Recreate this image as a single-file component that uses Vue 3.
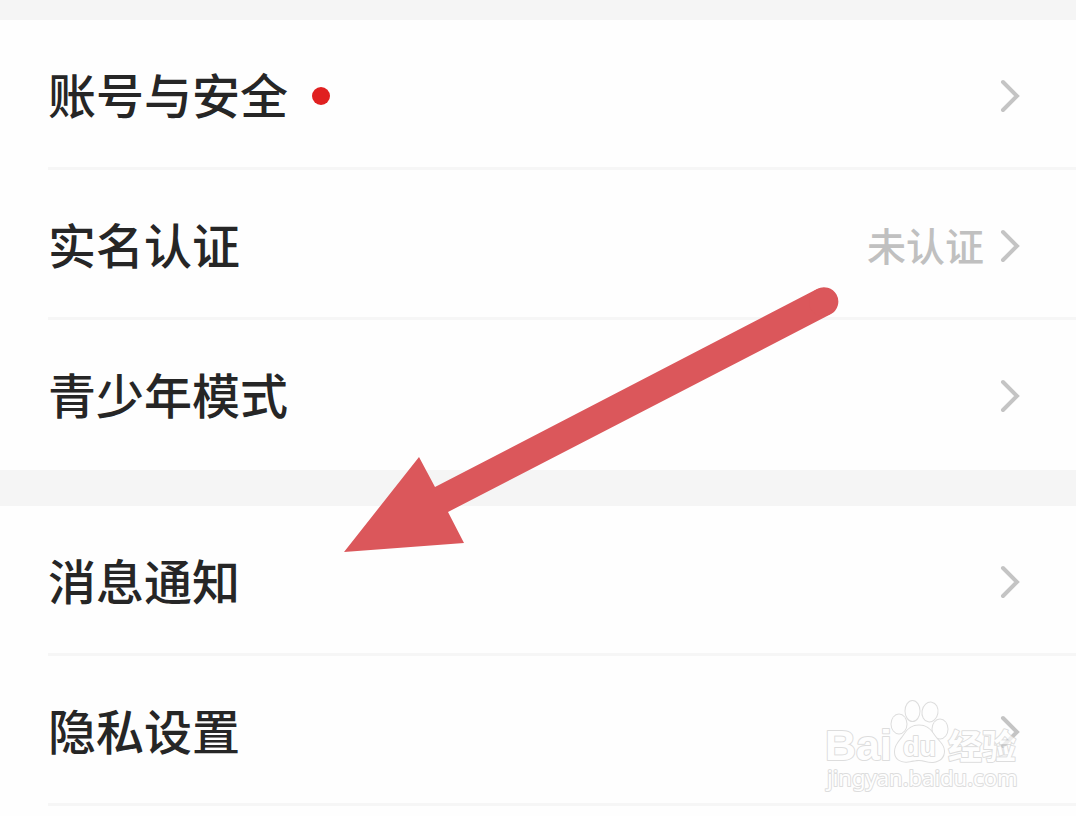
<script setup>
const groups = [
  [
    { label: '账号与安全', dot: true },
    { label: '实名认证', status: '未认证' },
    { label: '青少年模式' },
  ],
  [{ label: '消息通知' }, { label: '隐私设置' }],
]
</script>

<template>
  <main class="settings">
    <ul v-for="(group, i) in groups" :key="i" class="group">
      <li v-for="item in group" :key="item.label" class="item">
        <button type="button" class="row">
          <span class="label">{{ item.label }}</span>
          <span v-if="item.dot" class="dot"></span>
          <span class="status">{{ item.status }}</span>
          <svg class="chevron" viewBox="0 0 20 34" aria-hidden="true">
            <path d="M3 3 L17 17 L3 31" />
          </svg>
        </button>
      </li>
    </ul>

    <svg class="arrow" viewBox="0 0 496 266" aria-hidden="true">
      <path
        d="M1 265 L76 170 L92 200 L474 2 A14 14 0 0 1 488 27 L105 225 L121 256 Z"
      />
      <circle cx="480" cy="15" r="14" />
    </svg>

    <svg class="watermark" viewBox="0 0 200 100" aria-hidden="true">
      <text class="brand" x="1" y="65">Bai</text>
      <g class="paw">
        <ellipse cx="75" cy="29" rx="7.5" ry="9.5" />
        <ellipse cx="88.5" cy="16" rx="7" ry="10" />
        <ellipse cx="106" cy="17" rx="7.5" ry="9.5" transform="rotate(10 106 17)" />
        <ellipse cx="116" cy="34" rx="7.5" ry="9.5" />
        <path
          d="M95 30.500 C87 30.500 83 35 80 40 C77 45 71 49 71 57 C71 64 77 67.500 84 66.500 C90 65.500 92 65 95 65 C100 65 104 67.500 109 67 C116 66 120 62 120 56 C120 49 113 45 110 40 C107 35 103 30.500 95 30.500 Z"
        />
      </g>
      <text class="du" x="79" y="61">du</text>
      <text class="cn" x="124" y="64">经验</text>
      <text class="url" x="3" y="91">jingyan.baidu.com</text>
    </svg>
  </main>
</template>

<style>
body {
  margin: 0;
  background: #fefefe;
}
</style>

<style scoped>
.settings {
  position: relative;
  padding-top: 20px;
  background: linear-gradient(#f5f5f5 20px, #fefefe 20px);
  font-family: "Noto Sans CJK SC", sans-serif;
  overflow: hidden;
}
.group {
  margin: 0;
  padding: 0 0 0 48px;
  list-style: none;
}
.group + .group {
  border-top: 36px solid #f5f5f5;
}
.item {
  border-bottom: 3px solid #f6f6f6;
}
.item:last-child {
  border-bottom-color: transparent;
}
.group:last-of-type .item:last-child {
  border-bottom-color: #f6f6f6;
}
.row {
  display: flex;
  align-items: center;
  width: 100%;
  min-height: 147px;
  padding: 4px 56px 0 0;
  border: 0;
  background: none;
  font-family: inherit;
  text-align: left;
  cursor: pointer;
}
.label {
  padding-bottom: 6px;
  color: #262626;
  font-size: 48px;
  font-weight: 500;
  line-height: 64px;
}
.dot {
  width: 18px;
  height: 18px;
  margin-left: 24px;
  border-radius: 50%;
  background: #e02020;
}
.status {
  margin-left: auto;
  padding-bottom: 4px;
  color: #c0c0c0;
  font-size: 39px;
  font-weight: 500;
  line-height: 52px;
}
.chevron {
  width: 20px;
  height: 34px;
  margin-left: 16px;
  fill: none;
  stroke: #c4c4c4;
  stroke-width: 4;
  stroke-linecap: round;
}
.arrow {
  position: absolute;
  top: 287px;
  left: 343px;
  width: 496px;
  height: 266px;
  fill: #db575b;
  pointer-events: none;
}
.watermark {
  position: absolute;
  top: 695px;
  right: 52px;
  width: 200px;
  height: 100px;
  overflow: visible;
  fill: #ffffff;
  stroke: #d0d0d0;
  stroke-width: 2;
  stroke-linejoin: round;
  paint-order: stroke;
  opacity: 0.7;
  pointer-events: none;
}
.brand {
  font: bold 43px "Liberation Sans", sans-serif;
}
.du {
  font: bold 27px "Liberation Sans", sans-serif;
}
.cn {
  font: bold 34px "Noto Sans CJK SC", sans-serif;
}
.url {
  font: 22px "Noto Sans", sans-serif;
}
</style>
